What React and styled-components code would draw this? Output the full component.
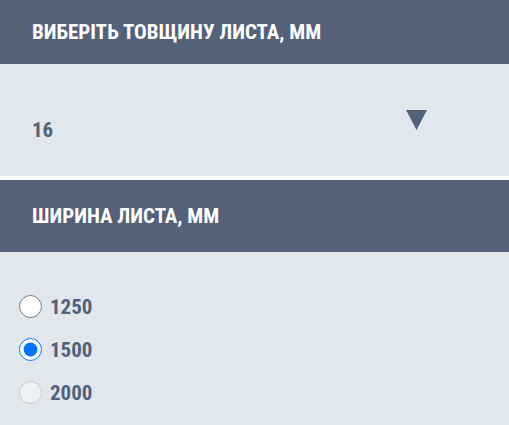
import React, { useState } from 'react';
import styled, { createGlobalStyle } from 'styled-components';

const GlobalStyle = createGlobalStyle`
  body {
    margin: 0;
    background: #e0e8ee;
    font-family: "Roboto", "Open Sans", sans-serif;
    font-stretch: 75%;
  }
`;

const Page = styled.div`
  display: flex;
  flex-direction: column;
  min-height: 425px;
  background: #e0e8ee;
`;

const SectionHeader = styled.div`
  display: flex;
  align-items: center;
  height: ${p => p.$height}px;
  padding-left: 32px;
  background: #536179;
  color: #ffffff;
  font-size: 21px;
  font-weight: 700;
  text-transform: uppercase;
`;

const SelectBox = styled.div`
  display: flex;
  align-items: center;
  justify-content: space-between;
  height: 116px;
  padding: 0 82px 0 32px;
  box-sizing: border-box;
  border-bottom: 4px solid #ffffff;
  color: #536179;
  font-size: 21px;
  font-weight: 700;
`;

const SelectValue = styled.span`
  padding-top: 20px;
`;

const Arrow = styled.svg`
  width: 21px;
  height: 20px;
  fill: #536179;
`;

const RadioList = styled.div`
  display: flex;
  flex-direction: column;
  gap: 20px;
  padding: 43px 0 0 19px;
`;

const RadioRow = styled.label`
  display: flex;
  align-items: center;
  gap: 8px;
  height: 23px;
  color: #536179;
  font-size: 21px;
  font-weight: 700;
`;

const Radio = styled.input`
  width: 23px;
  height: 23px;
  margin: 0;
`;

const widths = [
  { value: '1250' },
  { value: '1500' },
  { value: '2000', disabled: true },
];

export default function App() {
  const [width, setWidth] = useState('1500');

  return (
    <Page>
      <GlobalStyle />
      <SectionHeader $height={64}>Виберіть товщину листа, мм</SectionHeader>
      <SelectBox>
        <SelectValue>16</SelectValue>
        <Arrow viewBox="0 0 21 20">
          <polygon points="0,0 21,0 10.5,20" />
        </Arrow>
      </SelectBox>
      <SectionHeader $height={72}>Ширина листа, мм</SectionHeader>
      <RadioList>
        {widths.map(w => (
          <RadioRow key={w.value}>
            <Radio
              type="radio"
              name="width"
              value={w.value}
              disabled={w.disabled}
              checked={width === w.value}
              onChange={() => setWidth(w.value)}
            />
            {w.value}
          </RadioRow>
        ))}
      </RadioList>
    </Page>
  );
}
